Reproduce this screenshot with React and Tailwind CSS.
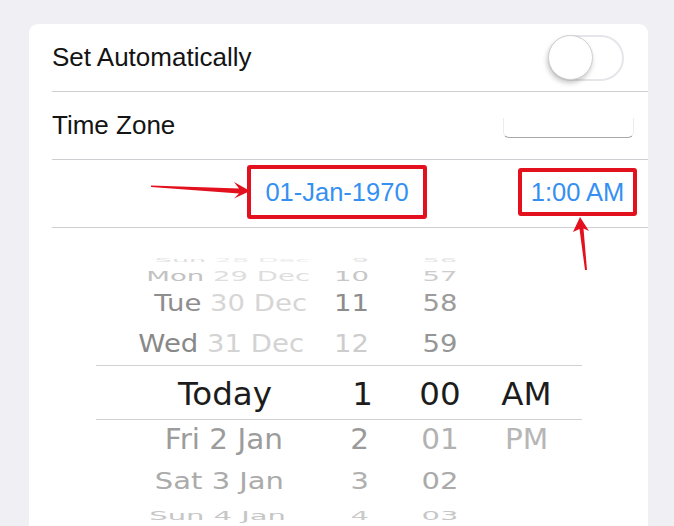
import React from 'react';

// One wheel row of the date picker. Rows away from the centre are squashed to fake the drum.
const rows = [
  {
    h: 'h-[16px]', scale: 'scale-y-[0.22]', size: 'text-[27px]', pr: 'pr-0',
    date: [['Sun ', 'text-[#e0e0e0]'], ['28 Dec', 'text-[#ebebeb]']],
    hour: ['9', 'text-[#e2e2e2]'], min: ['56', 'text-[#e4e4e4]'],
  },
  {
    h: 'h-[22px]', scale: 'scale-y-[0.53]', size: 'text-[27.5px]', pr: 'pr-0',
    date: [['Mon ', 'text-[#c2c2c2]'], ['29 Dec', 'text-[#dedede]']],
    hour: ['10', 'text-[#c6c6c6]'], min: ['57', 'text-[#cccccc]'],
  },
  {
    h: 'h-[38px]', scale: 'scale-y-[0.86]', size: 'text-[27.5px]', pr: 'pr-[3px]',
    date: [['Tue ', 'text-[#8e8e8e]'], ['30 Dec', 'text-[#d6d6d6]']],
    hour: ['11', 'text-[#8c8c8c]'], min: ['58', 'text-[#9c9c9c]'],
  },
  {
    h: 'h-[43px]', scale: 'scale-y-[0.9]', size: 'text-[27.5px]', pr: 'pr-[6px]',
    date: [['Wed ', 'text-[#888888]'], ['31 Dec', 'text-[#d3d3d3]']],
    hour: ['12', 'text-[#cdcdcd]'], min: ['59', 'text-[#969696]'],
  },
];

const lower = [
  {
    h: 'h-[41px]', scale: 'scale-y-[0.94]', size: 'text-[29.5px]', pr: 'pr-[27px]',
    date: [['Fri 2 Jan', 'text-[#9c9c9c]']],
    hour: ['2', 'text-[#9a9a9a]'], min: ['01', 'text-[#b2b2b2]'], ap: ['PM', 'text-[#b6b6b6]'],
  },
  {
    h: 'h-[40px]', scale: 'scale-y-[0.8]', size: 'text-[29px]', pr: 'pr-[26px]',
    date: [['Sat 3 Jan', 'text-[#ababab]']],
    hour: ['3', 'text-[#b0b0b0]'], min: ['02', 'text-[#aaaaaa]'],
  },
  {
    h: 'h-[17px]', scale: 'scale-y-[0.45]', size: 'text-[29px]', pr: 'pr-[24px]',
    date: [['Sun 4 Jan', 'text-[#c6c6c6]']],
    hour: ['4', 'text-[#cacaca]'], min: ['03', 'text-[#c6c6c6]'],
  },
  {
    h: 'h-[14px]', scale: 'scale-y-[0.18]', size: 'text-[28px]', pr: 'pr-[24px]',
    date: [['Mon 5 Jan', 'text-[#dcdcdc]']],
    hour: ['5', 'text-[#dcdcdc]'], min: ['04', 'text-[#dcdcdc]'],
  },
];

function WheelRow({ row }) {
  return (
    <div className={`${row.h} grid grid-cols-[214px_59px_125px_65px] items-center overflow-visible`}>
      <div className={`${row.scale} ${row.size} ${row.pr} text-right whitespace-nowrap leading-none`}>
        {row.date.map(([t, c]) => (
          <span key={t} className={c}>{t}</span>
        ))}
      </div>
      <div className={`${row.scale} ${row.size} ${row.hour[1]} text-right leading-none`}>{row.hour[0]}</div>
      <div className={`${row.scale} ${row.size} ${row.min[1]} pl-[17px] text-center leading-none`}>{row.min[0]}</div>
      <div className={`${row.scale} ${row.size} ${row.ap ? row.ap[1] : ''} text-center leading-none`}>
        {row.ap ? row.ap[0] : ''}
      </div>
    </div>
  );
}

function Toggle() {
  return (
    <div className="w-[76px] h-[46px] rounded-full border-2 border-[#e6e6ea] bg-white flex items-center">
      <div className="w-[45px] h-[45px] -ml-[2px] rounded-full bg-white border border-[#d0d0d0] shadow-[-1px_3px_5px_rgba(0,0,0,0.22)]" />
    </div>
  );
}

export default function App() {
  return (
    <div className="relative w-[674px] h-[526px] overflow-hidden bg-[#efeff4] pt-6 font-['Liberation_Sans',Arial,sans-serif]">
      <div className="ml-[29px] w-[619px] h-[502px] bg-white rounded-t-[9px]">
        {/* Settings rows */}
        <div className="ml-[23px]">
          <div className="h-[68px] border-b border-[#cfcfd3] flex items-center justify-between pr-[24px]">
            <span className="text-[26px] text-[#141414]">Set Automatically</span>
            <Toggle />
          </div>
          <div className="h-[68px] border-b border-[#cfcfd3] flex items-center justify-between pr-[14px]">
            <span className="text-[26px] text-[#141414]">Time Zone</span>
            <div className="w-[131px] h-[20px] mt-[4px] rounded-b-[6px] border-b border-x border-b-[#a8a8a8] border-x-[#ececec]" />
          </div>
          <div className="h-[68px] border-b border-[#cfcfd3] flex items-center justify-end pr-[11px] pb-[3px]">
            <div className="w-[180px] h-[54px] border-4 border-[#e3101e] rounded-[3px] flex items-center justify-center">
              <span className="text-[25.5px] text-[#3690f2]">01-Jan-1970</span>
            </div>
            <div className="w-[119px] h-[48px] ml-[91px] border-4 border-[#e3101e] rounded-[3px] flex items-center justify-center">
              <span className="text-[25.5px] text-[#3690f2]">1:00 AM</span>
            </div>
          </div>
        </div>

        {/* Date picker wheel */}
        <div className="ml-[67px] w-[486px] pt-[18px] font-['DejaVu_Sans',sans-serif]">
          {rows.map((r) => (
            <WheelRow key={r.date[0][0] + r.hour[0]} row={r} />
          ))}
          <div className="h-[55px] border-y border-[#d2d2d2] grid grid-cols-[214px_59px_125px_65px] items-center text-[32.5px] text-[#1c1c1c] leading-none">
            <div className="text-right pr-[38px] pt-[3px]">Today</div>
            <div className="text-right -mr-[4px] pt-[3px]">1</div>
            <div className="pl-[17px] text-center pt-[3px]">00</div>
            <div className="text-center pt-[3px]">AM</div>
          </div>
          {lower.map((r) => (
            <WheelRow key={r.date[0][0]} row={r} />
          ))}
        </div>
      </div>

      {/* Red annotation arrows */}
      <svg className="absolute top-0 left-0 pointer-events-none" width="674" height="526" viewBox="0 0 674 526">
        <path d="M151 185.5 L239 188.5 L234 182 L250 191 L234 198.5 L239 193.5 L151 187 Z" fill="#e3101e" />
        <path d="M585 270 L579.5 229 L573 232 L580 217 L589 231 L583.5 228.5 L587 270 Z" fill="#e3101e" />
      </svg>
    </div>
  );
}
